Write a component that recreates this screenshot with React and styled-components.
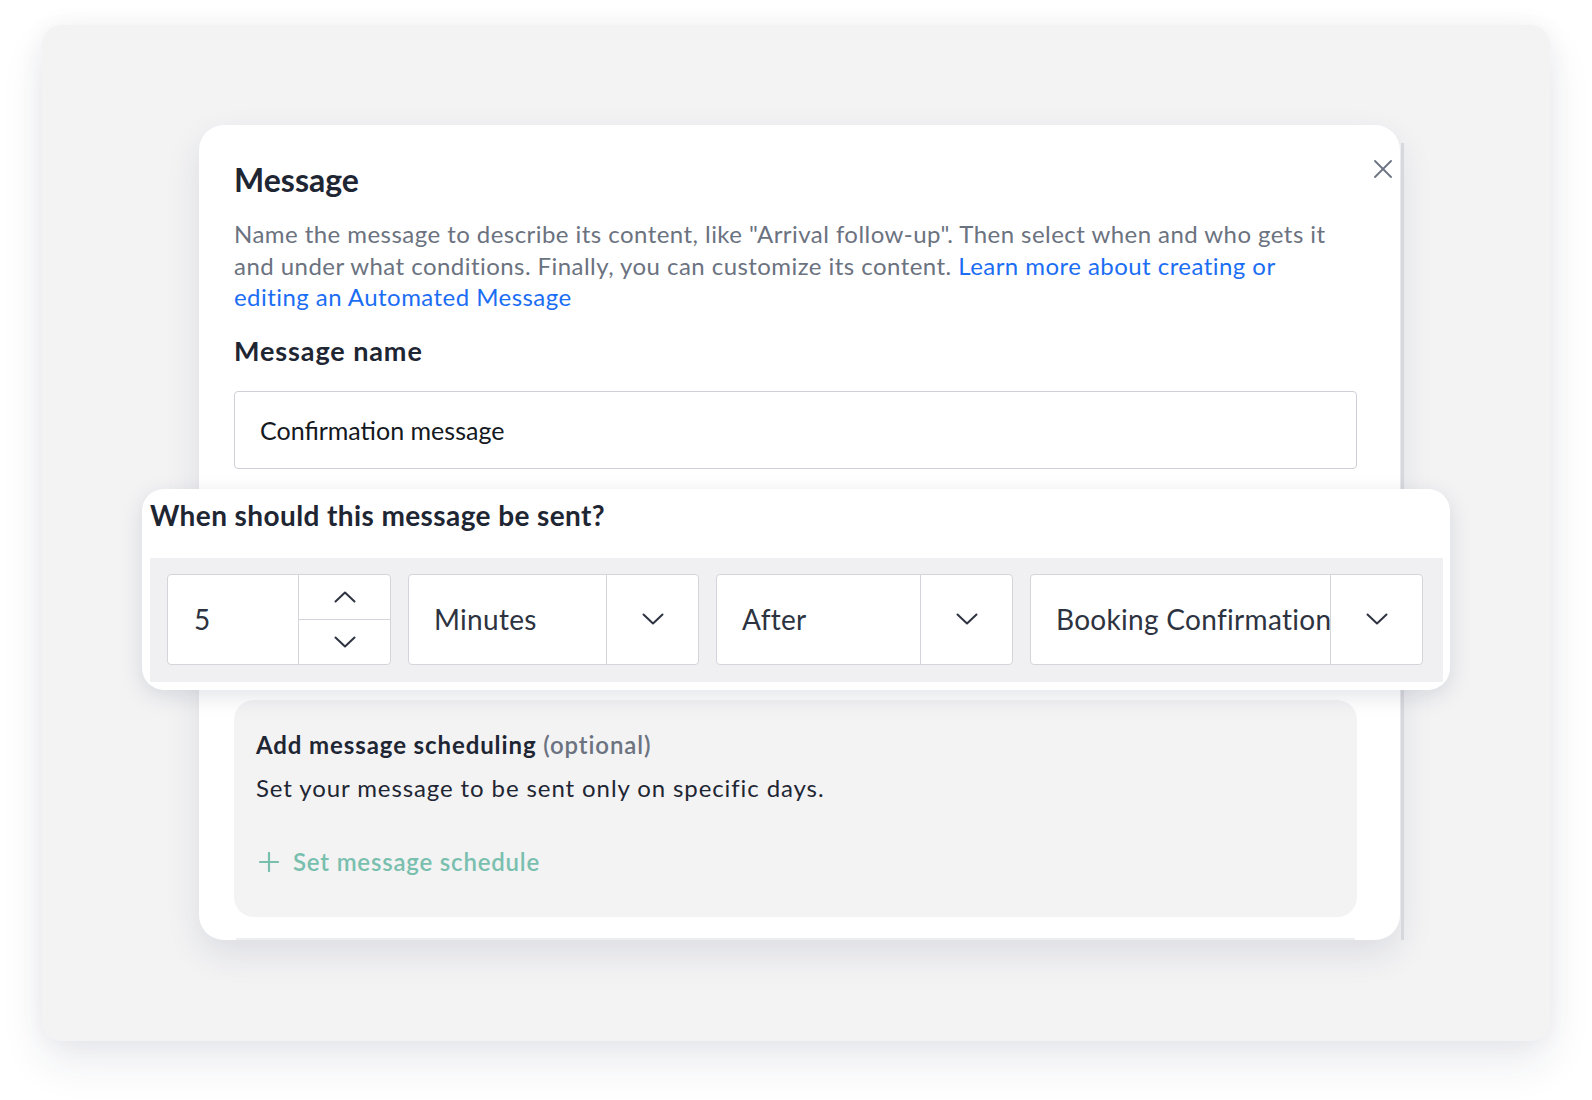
import React from 'react';
import styled, { createGlobalStyle } from 'styled-components';

const Global = createGlobalStyle`
  html, body { margin: 0; padding: 0; background: #ffffff; }
  body { font-family: Lato, "Noto Sans", sans-serif; -webkit-font-smoothing: antialiased; }
  * { box-sizing: border-box; }
`;

const Page = styled.div`
  width: 1592px;
  height: 1100px;
  padding: 25px 0 0 42px;
  overflow: hidden;
`;

const Backdrop = styled.div`
  width: 1508px;
  height: 1016px;
  background: #f3f3f4;
  border-radius: 20px;
  box-shadow: 0 22px 44px rgba(30, 40, 80, 0.09), 0 0 26px rgba(30, 40, 80, 0.05);
  padding: 100px 0 0 157px;
`;

const Modal = styled.div`
  position: relative;
  width: 1201px;
  height: 815px;
  background: #ffffff;
  border-radius: 25px;
  box-shadow: 0 14px 34px rgba(30, 40, 80, 0.1);
  padding: 36px 43px 0 35px;
  display: flow-root;
`;

const ScrollEdge = styled.div`
  position: absolute;
  top: 18px;
  bottom: 0;
  right: -4px;
  width: 3px;
  background: #d7d8dd;
`;

const BottomEdge = styled.div`
  position: absolute;
  left: 37px;
  right: 45px;
  bottom: 0;
  height: 2px;
  background: #eeeef0;
`;

const CloseButton = styled.button`
  position: absolute;
  top: 35px;
  right: 8px;
  width: 18px;
  height: 18px;
  padding: 0;
  border: 0;
  background: transparent;
  display: flex;
  align-items: center;
  justify-content: center;
`;

const Title = styled.h2`
  margin: 0;
  font-size: 32px;
  line-height: 38px;
  font-weight: 700;
  color: #1f2633;
`;

const Description = styled.p`
  margin: 19px 0 0;
  font-size: 24px;
  line-height: 31.5px;
  letter-spacing: 0.45px;
  color: #6b7280;
`;

const Link = styled.a`
  color: #1b6ef3;
  text-decoration: none;
`;

const Label = styled.h3`
  margin: 22px 0 0;
  font-size: 27px;
  line-height: 32px;
  letter-spacing: 0.9px;
  font-weight: 700;
  color: #1f2633;
`;

const TextInput = styled.div`
  margin-top: 24px;
  height: 78px;
  border: 1px solid #cfd1d6;
  border-radius: 4px;
  padding-left: 25px;
  display: flex;
  align-items: center;
  font-size: 25px;
  color: #141821;
`;

const Floating = styled.section`
  position: relative;
  z-index: 1;
  margin: 20px -93px 0 -92px;
  background: #ffffff;
  border-radius: 22px;
  box-shadow: 0 6px 22px rgba(30, 40, 80, 0.13);
  padding: 9px 7px 8px 8px;
`;

const PanelTitle = styled.h3`
  margin: 0 0 26px;
  font-size: 28px;
  line-height: 34px;
  letter-spacing: 0.4px;
  font-weight: 700;
  color: #1f2633;
`;

const ControlsRow = styled.div`
  display: flex;
  gap: 17px;
  padding: 16px 17px 17px;
  background: #f0f0f2;
`;

const Field = styled.div`
  display: flex;
  width: ${(p) => p.$w}px;
  height: 91px;
  flex-shrink: 0;
  background: #ffffff;
  border: 1px solid #d3d5da;
  border-radius: 4px;
`;

const FieldValue = styled.div`
  flex: 1;
  min-width: 0;
  display: flex;
  align-items: center;
  padding-left: ${(p) => p.$pad}px;
  font-size: 28px;
  letter-spacing: 0.3px;
  color: #2d3340;
  white-space: nowrap;
`;

const ArrowCell = styled.div`
  width: 92px;
  flex-shrink: 0;
  border-left: 1px solid #d3d5da;
  display: flex;
  align-items: center;
  justify-content: center;
`;

const Spinner = styled.div`
  width: 92px;
  flex-shrink: 0;
  border-left: 1px solid #d3d5da;
  display: flex;
  flex-direction: column;
`;

const SpinStep = styled.div`
  flex: 1;
  display: flex;
  align-items: center;
  justify-content: center;
  border-top: ${(p) => (p.$divided ? '1px solid #d3d5da' : '0')};
`;

const ScheduleBox = styled.div`
  margin-top: 10px;
  background: #f3f3f4;
  border-radius: 20px;
  padding: 29px 22px 39px;
`;

const ScheduleTitle = styled.div`
  font-size: 24px;
  line-height: 32px;
  letter-spacing: 0.9px;
  font-weight: 700;
  color: #1f2633;
`;

const Optional = styled.span`
  font-weight: 600;
  color: #6b7280;
`;

const ScheduleText = styled.div`
  margin-top: 11px;
  font-size: 24px;
  line-height: 32px;
  letter-spacing: 0.9px;
  color: #1f2633;
`;

const AddLink = styled.div`
  margin-top: 42px;
  display: flex;
  align-items: center;
  gap: 14px;
  padding-left: 3px;
  font-size: 24px;
  line-height: 32px;
  letter-spacing: 0.8px;
  font-weight: 600;
  color: #79bfae;
`;

const Chevron = ({ dir = 'down' }) => (
  <svg width="22" height="12" viewBox="0 0 22 12" fill="none" stroke="#2d3340" strokeWidth="2" strokeLinecap="round" strokeLinejoin="round">
    <polyline points={dir === 'down' ? '1.5,1.5 11,10.5 20.5,1.5' : '1.5,10.5 11,1.5 20.5,10.5'} />
  </svg>
);

const CloseIcon = () => (
  <svg width="18" height="18" viewBox="0 0 18 18" fill="none" stroke="#6b7280" strokeWidth="1.8" strokeLinecap="round">
    <line x1="1" y1="1" x2="17" y2="17" />
    <line x1="17" y1="1" x2="1" y2="17" />
  </svg>
);

const PlusIcon = () => (
  <svg width="20" height="20" viewBox="0 0 20 20" fill="none" stroke="#79bfae" strokeWidth="2.2" strokeLinecap="round">
    <line x1="10" y1="1" x2="10" y2="19" />
    <line x1="1" y1="10" x2="19" y2="10" />
  </svg>
);

const SelectField = ({ w, value }) => (
  <Field $w={w}>
    <FieldValue $pad={25}>{value}</FieldValue>
    <ArrowCell>
      <Chevron dir="down" />
    </ArrowCell>
  </Field>
);

export default function App() {
  return (
    <Page>
      <Global />
      <Backdrop>
        <Modal>
          <ScrollEdge />
          <BottomEdge />
          <CloseButton aria-label="Close">
            <CloseIcon />
          </CloseButton>
          <Title>Message</Title>
          <Description>
            Name the message to describe its content, like "Arrival follow-up". Then select when and who gets it
            <br />
            and under what conditions. Finally, you can customize its content.{' '}
            <Link href="#">
              Learn more about creating or
              <br />
              editing an Automated Message
            </Link>
          </Description>
          <Label>Message name</Label>
          <TextInput>Confirmation message</TextInput>

          <Floating>
            <PanelTitle>When should this message be sent?</PanelTitle>
            <ControlsRow>
              <Field $w={224}>
                <FieldValue $pad={26}>5</FieldValue>
                <Spinner>
                  <SpinStep>
                    <Chevron dir="up" />
                  </SpinStep>
                  <SpinStep $divided>
                    <Chevron dir="down" />
                  </SpinStep>
                </Spinner>
              </Field>
              <SelectField w={291} value="Minutes" />
              <SelectField w={297} value="After" />
              <SelectField w={393} value="Booking Confirmation" />
            </ControlsRow>
          </Floating>

          <ScheduleBox>
            <ScheduleTitle>
              Add message scheduling <Optional>(optional)</Optional>
            </ScheduleTitle>
            <ScheduleText>Set your message to be sent only on specific days.</ScheduleText>
            <AddLink>
              <PlusIcon />
              Set message schedule
            </AddLink>
          </ScheduleBox>
        </Modal>
      </Backdrop>
    </Page>
  );
}
